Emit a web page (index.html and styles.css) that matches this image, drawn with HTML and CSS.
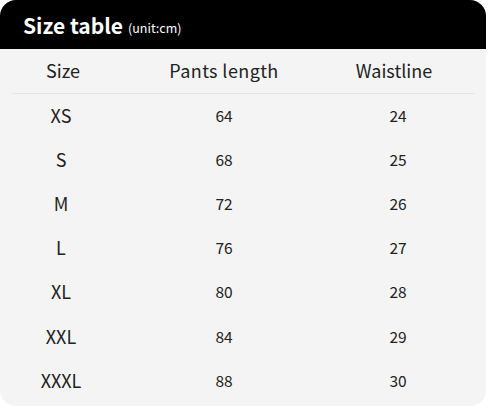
FILE: index.html
```html
<!DOCTYPE html>
<html>
<head>
<meta charset="utf-8">
<link rel="stylesheet" href="styles.css">
</head>
<body>
<div class="card">
  <div class="title"><span class="big">Size table</span><span class="unit">(unit:cm)</span></div>
  <div class="table">
    <div class="row head"><div>Size</div><div class="pl">Pants length</div><div>Waistline</div></div>
    <div class="row"><div class="sz">XS</div><div>64</div><div>24</div></div>
    <div class="row"><div class="sz">S</div><div>68</div><div>25</div></div>
    <div class="row"><div class="sz">M</div><div>72</div><div>26</div></div>
    <div class="row"><div class="sz">L</div><div>76</div><div>27</div></div>
    <div class="row"><div class="sz">XL</div><div>80</div><div>28</div></div>
    <div class="row"><div class="sz">XXL</div><div>84</div><div>29</div></div>
    <div class="row"><div class="sz">XXXL</div><div>88</div><div>30</div></div>
  </div>
</div>
</body>
</html>
```
FILE: styles.css
```css
html, body { margin: 0; padding: 0; background: #fff; }
body { font-family: "Noto Sans CJK SC", "Noto Sans", sans-serif; color: #222; }
.card {
  width: 486px;
  height: 406px;
  background: #f4f4f4;
  border-radius: 16px;
  overflow: hidden;
}
.title {
  height: 49px;
  background: #000;
  color: #fff;
  display: flex;
  align-items: center;
  padding-left: 23px;
  gap: 5px;
  box-sizing: border-box;
}
.big { font-size: 21px; font-weight: 700; }
.unit { font-size: 12.5px; padding-top: 5px; }
.table { display: flex; flex-direction: column; }
.row {
  display: grid;
  grid-template-columns: 122px 204px 144px;
  height: 44.2px;
  align-items: center;
  text-align: center;
  font-size: 15.5px;
  padding-bottom: 3px;
  box-sizing: border-box;
}
.row.head {
  height: 45px;
  font-size: 18px;
  margin: 0 11px 0 12px;
  grid-template-columns: 102px 220px 120px;
  border-bottom: 1px solid #e4e4e4;
  padding-bottom: 3px;
}
.pl { letter-spacing: 0.4px; }
.sz { font-size: 18px; }
```
